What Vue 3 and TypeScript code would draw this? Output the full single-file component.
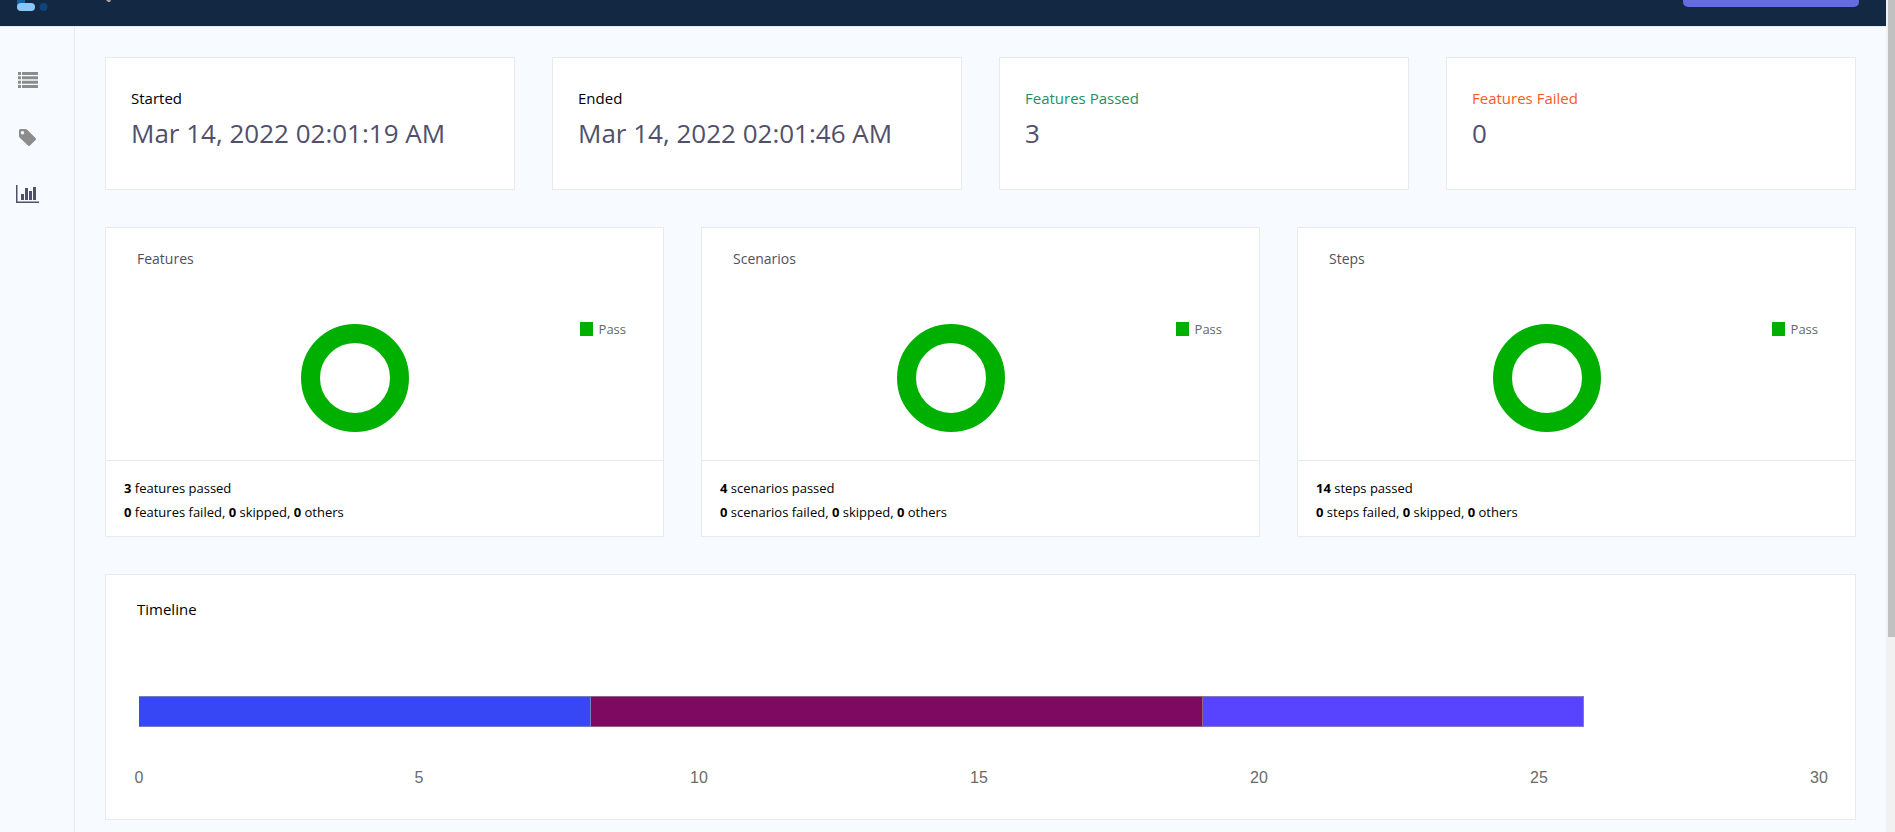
<script setup lang="ts">
interface Stat { label: string; value: string; tone: string }
interface Chart { title: string; noun: string; passed: number }
interface Segment { start: number; end: number; color: string }

const stats: Stat[] = [
  { label: 'Started', value: 'Mar 14, 2022 02:01:19 AM', tone: 'plain' },
  { label: 'Ended', value: 'Mar 14, 2022 02:01:46 AM', tone: 'plain' },
  { label: 'Features Passed', value: '3', tone: 'pass' },
  { label: 'Features Failed', value: '0', tone: 'fail' },
]

const charts: Chart[] = [
  { title: 'Features', noun: 'features', passed: 3 },
  { title: 'Scenarios', noun: 'scenarios', passed: 4 },
  { title: 'Steps', noun: 'steps', passed: 14 },
]

const axisMax = 30
const ticks = [0, 5, 10, 15, 20, 25, 30]
const segments: Segment[] = [
  { start: 0, end: 8.07, color: '#3747f5' },
  { start: 8.07, end: 19, color: '#7e0960' },
  { start: 19, end: 25.8, color: '#5843ff' },
]
const share = (s: Segment) => `${((s.end - s.start) / axisMax) * 100}%`
</script>

<template>
  <div class="window">
    <div class="page">
      <header class="topbar">
        <a class="logo" href="#" aria-label="Home">
          <svg width="31" height="11" viewBox="0 0 31 11">
            <path d="M0 0h8v8H0z" fill="#1660a8" />
            <rect x="0" y="3" width="18" height="8" rx="4" fill="#8ac7f9" />
            <circle cx="26.500" cy="7" r="4" fill="#12427c" />
          </svg>
        </a>
        <svg class="caret" width="6" height="2" viewBox="0 0 6 2"><path d="M0 0h5L4 2H2z" fill="#a8a39c" /></svg>
        <button class="action" type="button" aria-label="Report"></button>
      </header>

      <div class="body">
        <nav class="sidebar">
          <a href="#" aria-label="Tests">
            <svg width="24" height="18" viewBox="0 0 24 18" fill="#8c8c8c">
              <path d="M2 1h3v3H2zM6 1h16v3H6zM2 5.300h3v3H2zM6 5.300h16v3H6zM2 9.700h3v3H2zM6 9.700h16v3H6zM2 14h3v3H2zM6 14h16v3H6z" />
            </svg>
          </a>
          <a href="#" aria-label="Tags">
            <svg width="24" height="18" viewBox="0 0 24 18" fill="#8c8c8c">
              <path fill-rule="evenodd" d="M4.500 1H9q1.500 0 2.500 1L19.500 10q1 1 0 2L14 17.500q-1 1-2 0L4 10Q3 9 3 7.500V2.500Q3 1 4.500 1zM6.500 3a1.700 1.700 0 1 0 .01 0z" />
            </svg>
          </a>
          <a href="#" aria-label="Dashboard">
            <svg width="24" height="18" viewBox="0 0 24 18" fill="#50506b">
              <path d="M0 0h1.500v16.500H23V18H0zM5 9h3v6H5zM9 3h3v12H9zM13 6h3v9h-3zM17 2h3v13h-3z" />
            </svg>
          </a>
        </nav>

        <main class="content">
          <section class="stats">
            <article v-for="s in stats" :key="s.label" class="card stat">
              <p class="stat-label" :class="s.tone">{{ s.label }}</p>
              <p class="stat-value">{{ s.value }}</p>
            </article>
          </section>

          <section class="charts">
            <article v-for="c in charts" :key="c.title" class="card">
              <h2 class="chart-title">{{ c.title }}</h2>
              <div class="chart">
                <div class="plot">
                  <svg width="108" height="108" viewBox="0 0 108 108">
                    <circle cx="54" cy="54" r="44.500" fill="none" stroke="#00b000" stroke-width="19" />
                  </svg>
                </div>
                <div class="legend"><span class="swatch"></span>Pass</div>
              </div>
              <footer class="summary">
                <p><b>{{ c.passed }}</b> {{ c.noun }} passed</p>
                <p><b>0</b> {{ c.noun }} failed, <b>0</b> skipped, <b>0</b> others</p>
              </footer>
            </article>
          </section>

          <section class="card timeline">
            <h2 class="timeline-title">Timeline</h2>
            <div class="scale">
              <div class="track">
                <div v-for="s in segments" :key="s.start" class="segment" :style="{ width: share(s), background: s.color }"></div>
              </div>
              <div class="axis"><span v-for="t in ticks" :key="t">{{ t }}</span></div>
            </div>
          </section>
        </main>
      </div>
    </div>
    <div class="scrollbar"><div class="thumb"></div></div>
  </div>
</template>

<style>
body { margin: 0; background: #f7faff; }
</style>

<style scoped>
* { box-sizing: border-box; }
p, h2 { margin: 0; font-weight: 400; }
a { display: block; }
svg { display: block; }
.window {
  display: grid;
  grid-template-columns: 1fr 9px;
  height: 100vh;
  overflow: hidden;
  font-family: "Segoe UI", "Open Sans", "Noto Sans", sans-serif;
  color: #000;
}
.page { display: flex; flex-direction: column; min-width: 0; }
.topbar {
  display: flex;
  align-items: flex-start;
  height: 27px;
  flex: none;
  padding: 0 27px 0 17px;
  background: #132843;
  border-bottom: 1px solid #e6e9ed;
}
.caret { margin-left: 58px; }
.action {
  width: 176px;
  height: 7px;
  margin-left: auto;
  padding: 0;
  border: 0;
  border-radius: 0 0 5px 5px;
  background: #656be0;
}
.body { display: flex; flex: 1; }
.sidebar {
  display: flex;
  flex-direction: column;
  gap: 39px;
  width: 75px;
  flex: none;
  padding: 44px 0 0 16px;
  border-right: 1px solid #e6e9ed;
}
.sidebar a { width: 24px; }
.content {
  display: flex;
  flex-direction: column;
  gap: 37px;
  flex: 1;
  min-width: 0;
  padding: 30px 30px 0;
}
.card { background: #fff; border: 1px solid #e8eaed; }
.stats { display: grid; grid-template-columns: repeat(4, 1fr); gap: 37px; }
.charts { display: grid; grid-template-columns: repeat(3, 1fr); gap: 37px; }
.stat { padding: 28px 25px 33px; }
.stat-label { font-size: 15px; line-height: 24px; }
.pass { color: #24905f; }
.fail { color: #fb5a26; }
.stat-value { font-size: 26px; line-height: 46px; color: #50506b; }
.chart-title { padding: 18px 31px 0; font-size: 14px; line-height: 26px; color: #50505f; }
.chart { display: flex; align-items: flex-start; padding: 50px 37px 28px 24px; }
.plot { display: flex; flex: 1; justify-content: center; padding-top: 2px; }
.legend {
  display: flex;
  align-items: center;
  gap: 6px;
  font-size: 13px;
  line-height: 14px;
  color: #666;
}
.swatch { width: 13px; height: 14px; background: #00b000; }
.summary {
  padding: 15px 18px 12px;
  border-top: 1px solid #e6e9ed;
  font-size: 13px;
  line-height: 24px;
}
.timeline { padding: 21px 31px 30px; }
.timeline-title { font-size: 15px; line-height: 26px; }
.scale { padding: 74px 5px 0 2px; }
.track { display: flex; height: 31px; }
.segment { border: 1px solid rgba(160, 160, 160, 0.600); border-left: 0; }
.axis {
  display: flex;
  justify-content: space-between;
  margin-top: 40px;
  font-family: "Liberation Sans", Arial, sans-serif;
  font-size: 16px;
  line-height: 22px;
  color: #6b6b6b;
}
.axis span { display: flex; justify-content: center; width: 0; }
.scrollbar { padding-left: 2px; background: #f1f1f1; }
.thumb { height: 76.600%; background: #c1c1c1; }
</style>
